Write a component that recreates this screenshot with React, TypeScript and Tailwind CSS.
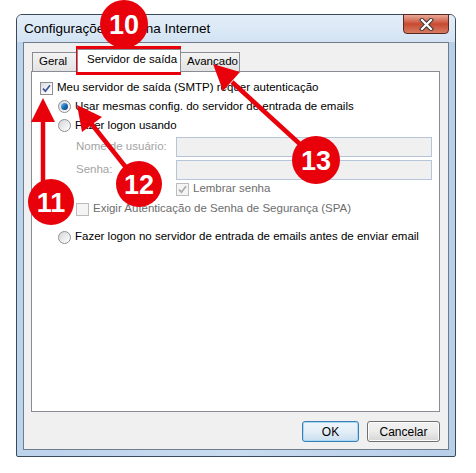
import React from 'react';

const ui = "font-['Liberation_Sans','Noto_Sans',sans-serif]";

const Check = ({ checked, disabled }: { checked?: boolean; disabled?: boolean }) => (
  <span
    className={`w-[13px] h-[13px] shrink-0 border flex items-center justify-center ${
      disabled
        ? 'border-[#bcbcbc] bg-[#f4f4f4]'
        : 'border-[#8e8f8f] bg-gradient-to-br from-[#d8dbe0] via-[#f2f2f2] to-white'
    }`}
  >
    {checked && (
      <svg width="9" height="9" viewBox="0 0 9 9">
        <path
          d="M1 4.6 L3.4 7.2 L8 1.2"
          stroke={disabled ? '#a9a9a9' : '#3e5595'}
          strokeWidth="1.7"
          fill="none"
        />
      </svg>
    )}
  </span>
);

const Radio = ({ checked }: { checked?: boolean }) => (
  <span className="w-[13px] h-[13px] shrink-0 rounded-full border border-[#8e8f8f] bg-gradient-to-br from-[#d5d7da] to-white flex items-center justify-center">
    {checked && (
      <span className="w-[7px] h-[7px] rounded-full bg-gradient-to-br from-[#7cc3f0] via-[#1a6fb8] to-[#0d3e7a]" />
    )}
  </span>
);

const Field = () => (
  <div className="w-[256px] h-[20px] shrink-0 border border-[#b5c6da] bg-[#f0f0f0]" />
);

export default function App() {
  return (
    <div className={`relative w-[476px] h-[473px] bg-white overflow-hidden pt-[14px] pl-[16px] whitespace-nowrap ${ui}`}>
      {/* window */}
      <div className="w-[440px] h-[443px] border border-[#3b4a5a] rounded-t-[6px] rounded-b-[2px] bg-gradient-to-r from-[#bcd3ec] via-[#c9dcf0] to-[#b7cfe9] flex flex-col">
        {/* title bar */}
        <div className="h-[27px] flex items-start bg-gradient-to-b from-[#e4eef9] to-[#d3e3f3] rounded-t-[5px]">
          <span className="self-center pl-[7px] text-[13.5px] text-black flex-1 leading-none pt-[1px]">
            Configurações <span className="text-[8px] tracking-[-0.5px]">de Email</span> na Internet
          </span>
          <button className="-mt-[1px] mr-[6px] w-[46px] h-[20px] rounded-b-[4px] border border-[#5a2820] bg-gradient-to-b from-[#e9a899] via-[#c74a30] to-[#d77a62] flex items-center justify-center">
            <svg width="15" height="13" viewBox="0 0 15 13">
              <path d="M3 2 L12 11 M12 2 L3 11" stroke="#3a3a3a" strokeWidth="4.2" strokeLinecap="square" />
              <path d="M3 2 L12 11 M12 2 L3 11" stroke="#ffffff" strokeWidth="2.2" strokeLinecap="square" />
            </svg>
          </button>
        </div>

        {/* client area */}
        <div className="flex-1 mx-[6px] mb-[6px] border border-[#6e7c8c] bg-[#f0f0f0] flex flex-col pl-[7px] pr-[8px] pb-[7px]">
          {/* tabs */}
          <div className="h-[28px] flex items-end pl-[1px] text-[11.5px] text-black">
            <div className="w-[45px] h-[19px] border border-b-0 border-[#898c95] bg-gradient-to-b from-[#f3f3f3] to-[#e3e3e3] flex items-center pl-[6px]">
              Geral
            </div>
            <div className="relative z-10 -mb-[1px] w-[104px] h-[23px] border border-b-0 border-[#898c95] bg-white flex items-center pl-[9px] pb-[2px]">
              Servidor de saída
            </div>
            <div className="w-[59px] h-[19px] border border-b-0 border-l-0 border-[#898c95] bg-gradient-to-b from-[#f3f3f3] to-[#e3e3e3] flex items-center pl-[6px]">
              Avançado
            </div>
          </div>

          {/* panel */}
          <div className="flex-1 border border-[#898c95] bg-white flex flex-col pt-[7px] pl-[8px] text-[11.5px] text-black">
            <div className="h-[18px] flex items-center gap-[4px]">
              <Check checked />
              <span>Meu servidor de saída (SMTP) requer autenticação</span>
            </div>
            <div className="h-[19px] flex items-center gap-[4px] pl-[18px]">
              <Radio checked />
              <span>Usar mesmas config. do servidor de entrada de emails</span>
            </div>
            <div className="h-[19px] flex items-center gap-[4px] pl-[18px]">
              <Radio />
              <span>Fazer logon usando</span>
            </div>
            <div className="mt-[2px] h-[20px] flex items-center pl-[36px]">
              <span className="w-[100px] text-[#a3a3a3]">Nome de usuário:</span>
              <Field />
            </div>
            <div className="mt-[3px] h-[20px] flex items-center pl-[36px]">
              <span className="w-[100px] text-[#a3a3a3]">Senha:</span>
              <Field />
            </div>
            <div className="h-[18px] flex items-center gap-[4px] pl-[136px]">
              <Check checked disabled />
              <span className="text-[#6d6d6d]">Lembrar senha</span>
            </div>
            <div className="mt-[2px] h-[18px] flex items-center gap-[4px] pl-[36px]">
              <Check disabled />
              <span className="text-[#6d6d6d]">Exigir Autenticação de Senha de Segurança (SPA)</span>
            </div>
            <div className="mt-[10px] h-[18px] flex items-center gap-[4px] pl-[18px]">
              <Radio />
              <span>Fazer logon no servidor de entrada de emails antes de enviar email</span>
            </div>
          </div>

          {/* buttons */}
          <div className="mt-[9px] flex justify-end gap-[8px] text-[12px] text-black">
            <button className="w-[57px] h-[21px] rounded-[3px] border border-[#3c7fb1] bg-gradient-to-b from-[#eef5fb] via-[#e4eef7] to-[#c9dff0] shadow-[inset_0_0_0_1px_#a8d8f6]">
              OK
            </button>
            <button className="w-[73px] h-[21px] rounded-[3px] border border-[#707070] bg-gradient-to-b from-[#f2f2f2] via-[#ebebeb] to-[#d6d6d6] shadow-[inset_0_0_0_1px_#fcfcfc]">
              Cancelar
            </button>
          </div>
        </div>
      </div>

      {/* annotations */}
      <svg className="absolute inset-0 pointer-events-none" width="476" height="473" viewBox="0 0 476 473">
        <g fill="#e8000b" stroke="#e8000b">
          {/* 10 */}
          <rect x="78" y="48" width="101" height="25" fill="none" strokeWidth="4" />
          <circle cx="124" cy="24" r="24" stroke="none" />
          {/* 13 */}
          <line x1="302" y1="146" x2="232" y2="82" strokeWidth="4.5" />
          <polygon points="213,64 240,72 223,91" stroke="none" />
          <circle cx="316" cy="160" r="24" stroke="none" />
          {/* 12 */}
          <line x1="128" y1="170" x2="90" y2="122" strokeWidth="4.5" />
          <polygon points="77,105 102,117 82,132" stroke="none" />
          <circle cx="139" cy="184" r="23" stroke="none" />
          {/* 11 */}
          <line x1="43" y1="118" x2="43" y2="190" strokeWidth="4.5" />
          <polygon points="43,98 55,122 31,122" stroke="none" />
          <circle cx="51" cy="202" r="23" stroke="none" />
        </g>
        <g fill="#ffffff" fontFamily="'Liberation Sans', Arial, sans-serif" fontWeight="bold" fontSize="27" textAnchor="middle">
          <text x="124" y="34">10</text>
          <text x="316" y="170">13</text>
          <text x="139" y="194">12</text>
          <text x="51" y="212">11</text>
        </g>
      </svg>
    </div>
  );
}
